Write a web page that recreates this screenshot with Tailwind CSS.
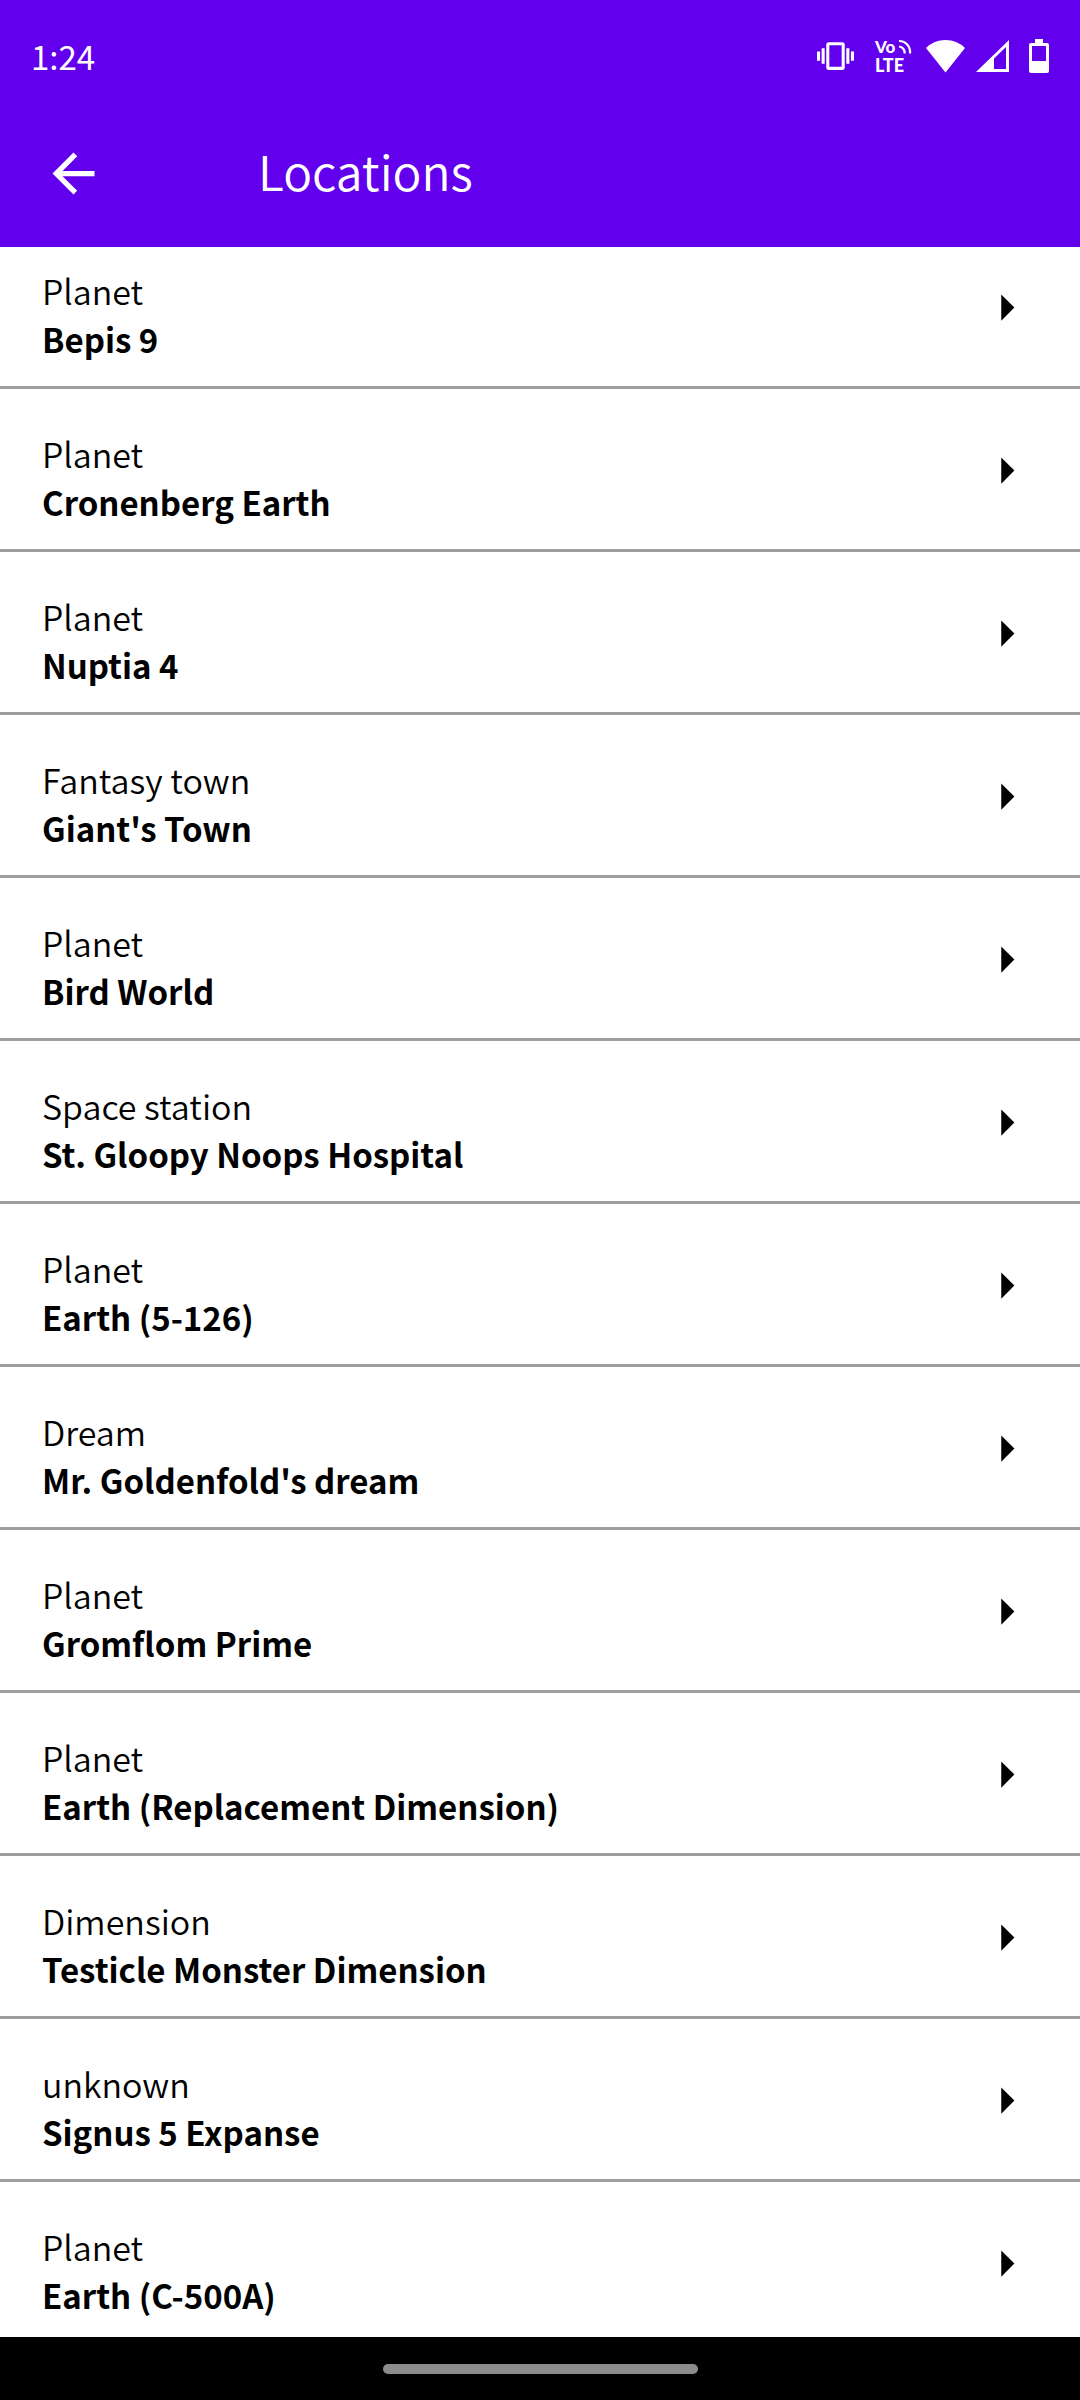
<!DOCTYPE html>
<html lang="en">
<head>
<meta charset="utf-8">
<meta name="viewport" content="width=device-width, initial-scale=1">
<title>Locations</title>
<script src="https://cdn.jsdelivr.net/npm/@tailwindcss/browser@4"></script>
</head>
<body class="flex h-screen flex-col overflow-hidden bg-white font-['Noto_Sans_CJK_SC',sans-serif] text-black">
  <header class="shrink-0 bg-[#6200ee] text-white">
    <div class="flex h-25 items-center justify-between pt-3 pr-[31px] pl-[31px]">
      <time class="text-[33px] leading-[49px]">1:24</time>
      <div class="flex items-center">
        <svg class="mr-[20px] h-[38px] w-[37px]" viewBox="0 0 24 24" fill="currentColor" role="img" aria-label="Vibrate"><path d="M0 15h2V9H0zM3 17h2V7H3zM22 9v6h2V9zM19 17h2V7h-2zM16.500 3h-9C6.670 3 6 3.670 6 4.500v15c0 .83.67 1.500 1.500 1.500h9c.83 0 1.500-.67 1.500-1.500v-15c0-.83-.67-1.500-1.500-1.500zM16 19H8V5h8z"/></svg>
        <svg class="mr-3 h-10 w-10 overflow-visible" viewBox="0 0 40 40" role="img" aria-label="VoLTE">
          <g fill="currentColor" font-family="Lato, sans-serif" font-weight="900"><text x="1" y="17" font-size="17">Vo</text><text x="1" y="36" font-size="18">LTE</text></g>
          <g fill="none" stroke="currentColor" stroke-width="2.200"><path d="M25 5a11 11 0 0 1 11 12.500M25 10.500a6 6 0 0 1 5.500 7"/></g>
        </svg>
        <svg class="mr-[11px] h-[34px] w-[39px]" viewBox="0 0 39 34" fill="currentColor" role="img" aria-label="Wi-Fi"><path d="M0 9Q8 1 19.500 1T39 9L19.500 33.500z"/></svg>
        <svg class="mr-5 h-[34px] w-[33px]" viewBox="0 0 33 34" role="img" aria-label="Signal" fill="currentColor"><path fill-rule="evenodd" d="M33 1v32H0zM30 8 18 19.500V30h12z"/></svg>
        <svg class="h-[34px] w-5" viewBox="0 0 20 34" role="img" aria-label="Battery" fill="currentColor"><path fill-rule="evenodd" d="M6 0h8v4h4q2 0 2 2v26q0 2-2 2H2q-2 0-2-2V6q0-2 2-2h4zM3 7v15h14V7z"/></svg>
      </div>
    </div>
    <div class="flex h-[147px] items-center gap-[153px] px-[42px]">
      <button type="button" aria-label="Back" class="size-[63px]"><svg class="size-full" viewBox="0 0 24 24" fill="currentColor"><path d="M20 11H7.830l5.590-5.590L12 4l-8 8 8 8 1.410-1.410L7.830 13H20z"/></svg></button>
      <h1 class="pb-2 text-[48px] leading-[70px] font-[350]">Locations</h1>
    </div>
  </header>

  <main class="min-h-0 flex-1 overflow-hidden">
    <ul id="list" class="-mt-[21px]"></ul>
  </main>

  <footer class="flex h-[63px] shrink-0 items-center justify-center bg-black">
    <div class="h-[10px] w-[315px] rounded-full bg-[#8c8c8c]"></div>
  </footer>

  <template id="row">
    <li class="border-b-3 border-[#9e9e9e]">
      <a href="#" class="flex items-center justify-between px-[42px] pt-0.5">
        <span class="flex flex-col pt-[38px] pb-[22px] leading-[49px]">
          <span class="type text-[34px] font-[350]"></span>
          <strong class="name text-[33px] font-bold"></strong>
        </span>
        <svg class="size-[63px]" viewBox="0 0 24 24" fill="currentColor" aria-hidden="true"><path d="M10 17l5-5-5-5z"/></svg>
      </a>
    </li>
  </template>
  <script>
    const locations = [
      ["Planet", "Bepis 9"],
      ["Planet", "Cronenberg Earth"],
      ["Planet", "Nuptia 4"],
      ["Fantasy town", "Giant's Town"],
      ["Planet", "Bird World"],
      ["Space station", "St. Gloopy Noops Hospital"],
      ["Planet", "Earth (5-126)"],
      ["Dream", "Mr. Goldenfold's dream"],
      ["Planet", "Gromflom Prime"],
      ["Planet", "Earth (Replacement Dimension)"],
      ["Dimension", "Testicle Monster Dimension"],
      ["unknown", "Signus 5 Expanse"],
      ["Planet", "Earth (C-500A)"],
    ];
    const list = document.getElementById("list");
    const row = document.getElementById("row");
    for (const [type, name] of locations) {
      const item = row.content.cloneNode(true);
      item.querySelector(".type").textContent = type;
      item.querySelector(".name").textContent = name;
      list.append(item);
    }
  </script>
</body>
</html>
